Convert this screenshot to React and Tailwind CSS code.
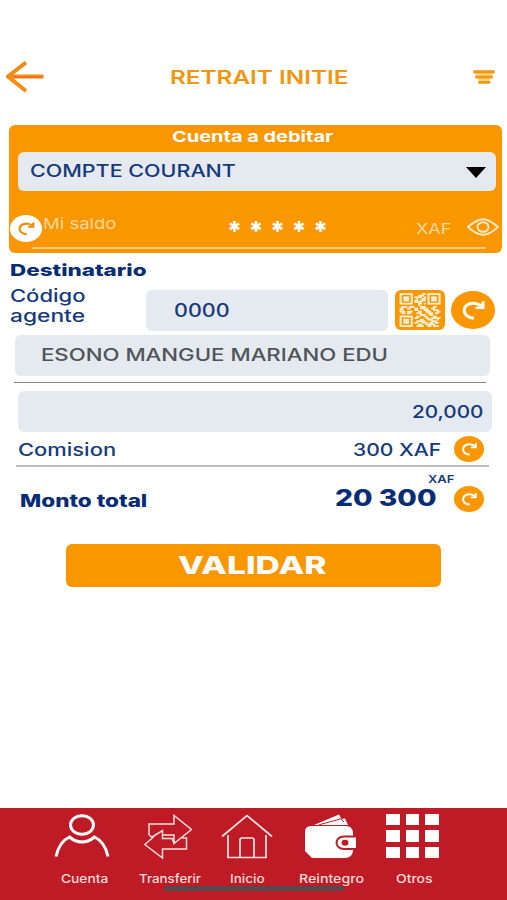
import React, { useLayoutEffect, useRef, useState } from "react";

// Stretches one line of text to the width of its box
const Wide = ({ children, className = "" }) => {
  const box = useRef(null);
  const text = useRef(null);
  const [scale, setScale] = useState(1);

  useLayoutEffect(() => {
    setScale(box.current.offsetWidth / text.current.offsetWidth);
  }, [children]);

  return (
    <span
      ref={box}
      className={`block shrink-0 whitespace-nowrap leading-none ${className}`}
    >
      <span
        ref={text}
        className="inline-block origin-left align-top"
        style={{ transform: `scaleX(${scale})` }}
      >
        {children}
      </span>
    </span>
  );
};

const Refresh = ({ className = "", dark = false }) => {
  const ink = dark ? "#f08c0a" : "#fff";

  return (
    <svg viewBox="0 0 44 38" preserveAspectRatio="none" className={className}>
      <ellipse cx="22" cy="19" rx="22" ry="19" fill={dark ? "#fff" : "#fa9600"} />
      <path
        d="M23 27.200C16.500 26.800 12.500 23 13.300 18.300C14.500 12.500 23.500 10 29.500 14.500"
        fill="none"
        stroke={ink}
        strokeWidth="3"
      />
      <path d="M33.500 10V18H24.500V15.800L29 15.300L31 10.500Z" fill={ink} />
    </svg>
  );
};

const BackArrow = () => (
  <svg viewBox="0 0 38 32" className="w-[38px] h-8 shrink-0">
    <path d="M20 1.500L2 15.500L20 30" fill="none" stroke="#f28c13" strokeWidth="4" />
    <path d="M3 15.500H37.500" stroke="#f28c13" strokeWidth="4" />
    <path d="M8 16.300H37" stroke="#ef6a1c" strokeWidth="1.500" />
  </svg>
);

const MenuIcon = () => (
  <svg viewBox="0 0 24 16" className="w-6 h-4 shrink-0">
    <path d="M3 5H21M6 10H18" stroke="#ffd27a" strokeWidth="3" />
    <g stroke="#f0960f" strokeWidth="3" strokeLinecap="round">
      <path d="M2.500 2.700H21.500M4.500 8H19.500M7.500 13.300H17" />
    </g>
  </svg>
);

const Eye = () => (
  <svg viewBox="0 0 32 18" className="w-8 h-[18px] mb-[3px] shrink-0">
    <g fill="none" stroke="#ffe9c4" strokeWidth="2">
      <path d="M1 9C7 3.500 11 1.200 16 1.200S25 3.500 31 9C25 14.500 21 16.800 16 16.800S7 14.500 1 9Z" />
      <ellipse cx="16" cy="9" rx="5.500" ry="4.800" />
    </g>
  </svg>
);

const qrRows = [
  "1111111000001101111111",
  "1000001000111001000001",
  "1011101011110101011101",
  "1011101001001101011101",
  "1011101011011101011101",
  "1000001011110001000001",
  "1111111000110101111111",
  "0000000000100000000000",
  "0111011100011100001100",
  "1100110011011110011000",
  "1100000011000111001110",
  "1110111000110011100011",
  "0110110001110001110110",
  "0000000000011100110000",
  "1111111001100110001100",
  "1000001011000011011111",
  "1011101000011001110010",
  "1011101001111100011100",
  "1011101011001110110110",
  "1000001000110011111000",
  "1111111001111001101110",
];

const QrCode = () => (
  <svg
    viewBox="-2.500 -2 27 25"
    preserveAspectRatio="none"
    className="w-[50px] h-10 rounded-md bg-[#fa9600]"
  >
    {qrRows.map((row, y) =>
      row
        .split("")
        .map((cell, x) =>
          cell === "1" ? (
            <rect key={`${x}-${y}`} x={x} y={y} width="1.100" height="1.100" fill="#fff3dc" />
          ) : null
        )
    )}
  </svg>
);

const AccountIcon = () => (
  <svg viewBox="0 0 56 46" className="w-14 h-[46px] mr-[4px]">
    <g fill="none" stroke="#fff" strokeWidth="3">
      <ellipse cx="28" cy="11" rx="11.500" ry="9.300" />
      <path d="M2 42.500C4 33 9 26 15.500 23C23 29.500 33 29.500 40.500 23C47 26 52 33 54 42.500" />
    </g>
  </svg>
);

const TransferIcon = () => (
  <svg viewBox="0 0 48 46" className="w-12 h-[46px] mr-[5px]">
    <g fill="none" stroke="#ffdedb" strokeWidth="1.500">
      <path d="M5 21V10H30V1.500L47.500 15.500L30 29.500V21H18.500" />
      <path d="M5 21L8 23L18.500 16.500V21M5.500 26.500L.8 30.500L18.500 44V35H42.500V24H38" />
      <path d="M5.500 26.500L10 22.500M18.500 21V24.500H28L30 29" />
    </g>
  </svg>
);

const HomeIcon = () => (
  <svg viewBox="0 0 52 46" className="w-[52px] h-[46px]">
    <g fill="none" stroke="#ffe5e2" strokeWidth="1.700">
      <path d="M1 22.500L26 1.500L51 22.500" />
      <path d="M7 21V43.500H45V21" />
      <path d="M19 43V26Q19 24 21 24H31Q33 24 33 26V43" />
    </g>
  </svg>
);

const WalletIcon = () => (
  <svg viewBox="0 0 52 46" className="w-[52px] h-[46px] mr-[2px]">
    <path d="M10 11L35 .5L37.500 5L41 4.500L44 11Z" fill="#fff" />
    <path d="M15 10.800L37 4.800L40 8" fill="none" stroke="#bf1b26" strokeWidth="1" />
    <path
      d="M7 12H42Q48 12 49 18V37Q48 44 41 44H8L1 37V18Q1 12 7 12Z"
      fill="#fff"
    />
    <path
      d="M52 22.500H40C30 22.500 30 35 40 35H52"
      fill="#fff"
      stroke="#bf1b26"
      strokeWidth="2"
    />
    <ellipse cx="41" cy="28.700" rx="3.500" ry="3" fill="#bf1b26" />
  </svg>
);

const GridIcon = () => (
  <div className="grid grid-cols-3 gap-x-[6px] gap-y-[5px] w-[53px] h-11 mb-0.5 mr-[3px]">
    {[...Array(9)].map((_, i) => (
      <span key={i} className="bg-white" />
    ))}
  </div>
);

const tabs = [
  { name: "Cuenta", icon: <AccountIcon />, box: "ml-[54px] w-[60px]", label: "w-[47px]" },
  { name: "Transferir", icon: <TransferIcon />, box: "ml-[24px] w-[64px]", label: "w-[62px]" },
  { name: "Inicio", icon: <HomeIcon />, box: "ml-[15px] w-[60px]", label: "w-[35px]" },
  { name: "Reintegro", icon: <WalletIcon />, box: "ml-[21px] w-[66px]", label: "w-[65px]" },
  { name: "Otros", icon: <GridIcon />, box: "ml-[20px] w-[60px]", label: "w-[36px]" },
];

const App = () => {
  return (
    <div className="w-[507px] h-[900px] flex flex-col overflow-hidden bg-white font-['Inter',sans-serif] font-medium text-[#153a7d]">
      {/* HEADER */}
      <header className="mt-[52px] h-[50px] pl-1.5 pr-[11px] flex items-center text-[#f0960f]">
        <BackArrow />
        <Wide className="w-[179px] ml-[126px] mr-auto text-[19px] font-semibold">
          RETRAIT INITIE
        </Wide>
        <MenuIcon />
      </header>

      {/* ACCOUNT */}
      <section className="mt-[23px] ml-[9px] w-[493px] h-32 rounded-md bg-[#fa9600] text-white">
        <div className="h-[27px] pb-[4px] pl-[163px] flex items-center">
          <Wide className="w-[161px] text-[15px] font-bold">Cuenta a debitar</Wide>
        </div>
        <div className="mx-[9px] w-[478px] h-[39px] pl-3 pr-[10px] rounded-md bg-[#e5eaf0] flex items-center justify-between text-[#153a7d]">
          <Wide className="w-[206px] text-[17px]">COMPTE COURANT</Wide>
          <svg viewBox="0 0 20 11" className="w-5 h-[11px] mt-0.5">
            <path d="M0 0H20L10 11Z" fill="#000" />
          </svg>
        </div>
        <div className="mt-[23px] pl-px h-[29px] flex items-center text-[#ffd79a] font-normal">
          <Refresh dark className="w-8 h-[27px]" />
          <Wide className="w-[74px] ml-[1px] mb-[10px] text-[15px]">Mi saldo</Wide>
          <div className="ml-[110px] w-[101px] h-7 flex items-center justify-between text-white">
            {[...Array(5)].map((_, i) => (
              <Wide key={i} className="w-[15px] pt-[5px] text-[26px] font-extrabold">
                *
              </Wide>
            ))}
          </div>
          <Wide className="w-[35px] ml-[88px] mt-[2px] mr-4 text-[14.500px]">XAF</Wide>
          <Eye />
        </div>
        <div className="mt-[4px] ml-[23px] w-[454px] h-0.5 bg-[#ffc878]" />
      </section>

      {/* RECIPIENT */}
      <section>
        <Wide className="mt-[9px] ml-2.5 w-[136px] text-[16.500px] font-extrabold text-[#072c75]">
          Destinatario
        </Wide>
        <div className="mt-[11px] pl-2.5 h-[41px] flex items-center">
          <div className="w-[136px] flex flex-col gap-[3px] pb-[8px]">
            <Wide className="w-[75px] text-[17px]">Código</Wide>
            <Wide className="w-[75px] text-[17px]">agente</Wide>
          </div>
          <div className="w-[242px] h-[41px] pl-7 pt-px rounded-md bg-[#e5eaf0] flex items-center">
            <Wide className="w-[55px] text-[18px]">0000</Wide>
          </div>
          <div className="ml-[7px] flex items-center gap-1.5">
            <QrCode />
            <Refresh className="w-11 h-[38px]" />
          </div>
        </div>
        <div className="mt-[4px] ml-[15px] w-[475px] h-[41px] pl-[26px] pt-px rounded-md bg-[#e5eaf0] flex items-center text-[#505458]">
          <Wide className="w-[347px] text-[17px]">ESONO MANGUE MARIANO EDU</Wide>
        </div>
        <div className="mt-1.5 ml-3.5 w-[472px] h-px bg-[#858585]" />
      </section>

      {/* AMOUNTS */}
      <section>
        <div className="mt-2 ml-[18px] w-[474px] h-[41px] pr-[9px] pt-px rounded-md bg-[#e5eaf0] flex items-center justify-end">
          <Wide className="w-[71px] text-[17.500px]">20,000</Wide>
        </div>
        <div className="mt-[4px] h-[27px] pl-[18px] flex items-center">
          <Wide className="w-[98px] mt-[2px] text-[17px]">Comision</Wide>
          <Wide className="ml-[237px] w-[88px] mt-[2px] text-[17px]">300 XAF</Wide>
          <Refresh className="ml-[13px] w-[30px] h-[26px]" />
        </div>
        <div className="mt-[2px] ml-4 w-[473px] h-0.5 bg-[#bcbcbc]" />
        <Wide className="mt-[7px] ml-[428px] w-[26px] text-[11px] font-semibold">XAF</Wide>
        <div className="h-[27px] mt-px pl-5 flex items-center text-[#072c75]">
          <Wide className="w-[127px] mt-[5px] text-[17px] font-extrabold">Monto total</Wide>
          <Wide className="ml-[188px] w-[102px] mb-[2px] text-[23px] font-extrabold">20 300</Wide>
          <Refresh className="ml-[17px] w-[30px] h-[26px]" />
        </div>
      </section>

      <button className="mt-[31px] ml-[66px] w-[375px] h-[43px] shrink-0 rounded-md bg-[#fa9600] pl-[112px] flex items-center text-white text-left">
        <Wide className="w-[148px] text-[25px] font-extrabold">VALIDAR</Wide>
      </button>

      {/* TAB BAR */}
      <nav className="relative mt-auto h-[92px] shrink-0 pt-[6px] flex bg-[#bf1b26] text-[#ffdcd8]">
        {tabs.map((tab) => (
          <div key={tab.name} className={`flex flex-col items-center shrink-0 ${tab.box}`}>
            {tab.icon}
            <Wide className={`mt-[13px] text-[12px] ${tab.label}`}>{tab.name}</Wide>
          </div>
        ))}
        <div className="absolute left-[164px] top-[78px] w-[180px] h-[5px] rounded-full bg-[#57494b]" />
      </nav>
    </div>
  );
};

export default App;
